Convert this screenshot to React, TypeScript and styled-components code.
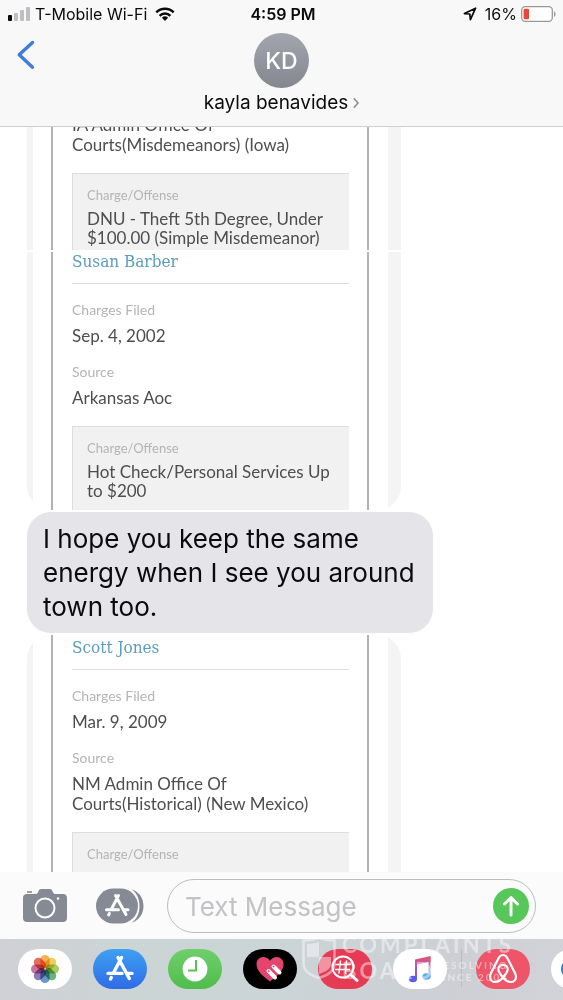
import React from "react";
import styled, { createGlobalStyle } from "styled-components";

const GlobalStyle = createGlobalStyle`
  *, *::before, *::after { box-sizing: border-box; }
  body { margin: 0; background: #ffffff; }
  button { border: 0; padding: 0; background: none; cursor: pointer; }
`;

const Screen = styled.div`
  position: relative;
  display: flex;
  flex-direction: column;
  height: 100vh;
  overflow: hidden;
  background: #ffffff;
  color: #0b0b0c;
  font-family: Inter, "Liberation Sans", sans-serif;
`;

const Header = styled.header`
  flex: none;
  background: #f8f8f8;
  border-bottom: 1px solid #cfcfd0;
`;

const StatusBar = styled.div`
  display: grid;
  grid-template-columns: 1fr auto 1fr;
  align-items: center;
  height: 28px;
  padding: 0 7px 0 8px;
  font-size: 16px;
  line-height: 20px;
`;

const StatusGroup = styled.div<{ $end?: boolean }>`
  display: flex;
  align-items: center;
  justify-content: ${(p) => (p.$end ? "flex-end" : "flex-start")};
  gap: ${(p) => (p.$end ? 4 : 5)}px;
  svg { display: block; }
`;

const Clock = styled.time`
  padding-left: 2px;
  font-weight: 600;
`;

const Battery = styled.span`
  display: flex;
  align-items: center;
  gap: 8px;
`;

const NavRow = styled.div`
  display: grid;
  grid-template-columns: 1fr auto 1fr;
  align-items: start;
  height: 98px;
`;

const BackButton = styled.button`
  justify-self: start;
  margin: 12px 0 0 16px;
  svg { display: block; }
`;

const Contact = styled.button`
  display: flex;
  flex-direction: column;
  align-items: center;
  gap: 3px;
  padding-top: 5px;
  color: inherit;
  font-family: inherit;
`;

const Avatar = styled.span`
  display: grid;
  place-items: center;
  width: 55px;
  height: 55px;
  border-radius: 50%;
  background: linear-gradient(#a3a6ae, #84878f);
  color: #ffffff;
  font-size: 23px;
  font-weight: 500;
`;

const ContactName = styled.span`
  display: flex;
  align-items: center;
  gap: 5px;
  font-size: 19px;
  line-height: 24px;
`;

const Thread = styled.main`
  flex: 1;
  min-height: 0;
  display: flex;
  flex-direction: column;
  align-items: flex-start;
  gap: 2px;
  padding-left: 27px;
`;

const Shot = styled.article<{ $position: "top" | "middle" | "last" }>`
  display: flex;
  width: 374px;
  overflow: hidden;
  padding: 0 13px 0 6px;
  background: #f4f4f4;
  ${(p) => p.$position === "top" && "height: 123px; align-items: flex-end;"}
  ${(p) => p.$position === "middle" && "height: 258px; border-radius: 0 0 24px 24px;"}
  ${(p) => p.$position === "last" && "flex: 1; min-height: 0; border-radius: 24px 24px 0 0;"}
`;

const Sheet = styled.div<{ $position: "top" | "middle" | "last" }>`
  flex: 1;
  align-self: ${(p) => (p.$position === "top" ? "flex-end" : "stretch")};
  padding: 0 19px 0 18px;
  background: #ffffff;
`;

const Record = styled.div<{ $position: "top" | "middle" | "last" }>`
  height: 100%;
  padding: ${(p) => (p.$position === "last" ? 3 : 0)}px 18px 0 19px;
  border: 2px solid #b2b2b2;
  border-width: 0 2px;
  color: #4e4e4e;
  font-family: Lato, "Open Sans", sans-serif;
`;

const PersonName = styled.h2`
  margin: 0 0 17px;
  padding-bottom: 13px;
  border-bottom: 1px solid #dcdcdc;
  color: #5a9dbd;
  font-family: "DejaVu Serif Condensed", "Liberation Serif", serif;
  font-size: 17px;
  font-weight: 400;
  line-height: 18px;
`;

const Fields = styled.dl`
  margin: 0;
  padding-bottom: 1px;
`;

const Label = styled.dt`
  margin-bottom: 7px;
  color: #b4b4b4;
  font-size: 14px;
  line-height: 18px;
`;

const Value = styled.dd`
  margin: 0 0 17px;
  font-size: 17px;
  line-height: 20px;
  white-space: pre-line;
`;

const Charge = styled.dl`
  margin: 0;
  padding: 12px 14px 3px;
  border: 1px solid #dddddd;
  border-width: 1px 0 0 1px;
  background: #f1f1f1;

  ${Label} { margin-bottom: 5px; font-size: 13px; }
  ${Value} { margin-bottom: 0; line-height: 19px; }
`;

const ChargeFill = styled(Charge)`
  height: 140px;
`;

const Bubble = styled.p`
  flex: none;
  width: 406px;
  margin: 0;
  padding: 10px 16px 9px;
  border-radius: 24px;
  background: #e4e4e9;
  color: #0b0b0c;
  font-size: 26px;
  line-height: 34px;
`;

const Composer = styled.form`
  flex: none;
  display: flex;
  align-items: center;
  height: 67px;
  padding: 0 27px 0 22px;
  background: #fbfbfc;
`;

const ToolButton = styled.button<{ $gap: number }>`
  flex: none;
  margin-right: ${(p) => p.$gap}px;
  svg { display: block; }
`;

const Field = styled.div`
  flex: 1;
  min-width: 0;
  display: flex;
  align-items: center;
  height: 54px;
  padding: 0 6px 0 17px;
  border: 1px solid #bdbdc0;
  border-radius: 27px;
`;

const TextInput = styled.input`
  flex: 1;
  min-width: 0;
  padding: 2px 0 0;
  border: 0;
  outline: 0;
  background: transparent;
  color: #0b0b0c;
  font-family: inherit;
  font-size: 26px;
  line-height: 34px;
  &::placeholder { color: #c3c3c6; opacity: 1; }
`;

const SendButton = styled.button`
  flex: none;
  display: grid;
  place-items: center;
  width: 36px;
  height: 36px;
  border-radius: 50%;
  background: #58c759;
`;

const AppStrip = styled.nav`
  flex: none;
  display: flex;
  align-items: flex-start;
  gap: 21px;
  height: 61px;
  padding: 10px 0 0 18px;
  overflow: hidden;
  background: linear-gradient(90deg, #d0d0d7 0, #cbd5d4 24%, #cbd4d7 50%, #cdcfd5 80%, #d1d3d9 100%);
`;

const AppButton = styled.button<{ $fill: string }>`
  flex: none;
  display: grid;
  place-items: center;
  width: 54px;
  height: 40px;
  border-radius: 20px;
  background: ${(p) => p.$fill};
  svg { display: block; }
`;

const StripDivider = styled.span`
  flex: none;
  width: 1px;
  height: 38px;
  margin: 0 -7px;
  background: #b9bcc2;
`;

const Watermark = styled.div`
  position: absolute;
  right: 48px;
  bottom: 16px;
  display: flex;
  align-items: center;
  gap: 6px;
  color: #ffffff;
  opacity: 0.45;
  font-family: Lato, sans-serif;
  pointer-events: none;
`;

const WatermarkText = styled.div`
  width: 173px;
  font-size: 22px;
  font-weight: 700;
  line-height: 26px;
  letter-spacing: 3px;
`;

const WatermarkRow = styled.div`
  display: flex;
  align-items: center;
  justify-content: space-between;
`;

const Tagline = styled.span`
  display: flex;
  flex-direction: column;
  width: 81px;
  font-size: 10px;
  line-height: 12px;
  letter-spacing: 2px;
  white-space: nowrap;
`;

const StoreGlyph = ({ size }: { size: number }) => (
  <svg width={size} height={size} viewBox="0 0 28 28" fill="none" stroke="#fff" strokeWidth="3.4" strokeLinecap="round">
    <path d="M15.6 2.5 7.4 18M12 2.5l11.3 21M2 18.4h14M21 18.4h5M5.3 22.4l-.8 1.6" />
  </svg>
);

const petals = ["#f2a33a", "#e9c93c", "#9cc24b", "#54a66a", "#4b86c0", "#7a63ab", "#c0598f", "#e4553f"];

const PhotosGlyph = () => (
  <svg width="30" height="30" viewBox="-15 -15 30 30">
    {petals.map((fill, i) => (
      <rect key={fill} x="-4.6" y="-14" width="9.2" height="13.4" rx="4.6" fill={fill} fillOpacity="0.85" transform={`rotate(${i * 45})`} style={{ mixBlendMode: "multiply" }} />
    ))}
  </svg>
);

interface RecordData {
  position: "top" | "middle" | "last";
  name?: string;
  filed?: string;
  source: string;
  charge?: string;
}

const records: RecordData[] = [
  { position: "top", source: "IA Admin Office Of\nCourts(Misdemeanors) (Iowa)", charge: "DNU - Theft 5th Degree, Under\n$100.00 (Simple Misdemeanor)" },
  { position: "middle", name: "Susan Barber", filed: "Sep. 4, 2002", source: "Arkansas Aoc", charge: "Hot Check/Personal Services Up\nto $200" },
  { position: "last", name: "Scott Jones", filed: "Mar. 9, 2009", source: "NM Admin Office Of\nCourts(Historical) (New Mexico)" },
];

const RecordShot = ({ position, name, filed, source, charge }: RecordData) => {
  const Box = position === "top" ? Charge : ChargeFill;
  return (
    <Shot $position={position}>
      <Sheet $position={position}>
        <Record $position={position}>
          {name && <PersonName>{name}</PersonName>}
          <Fields>
            {filed && (
              <>
                <Label>Charges Filed</Label>
                <Value>{filed}</Value>
                <Label>Source</Label>
              </>
            )}
            <Value>{source}</Value>
          </Fields>
          <Box>
            <Label>Charge/Offense</Label>
            {charge && <Value>{charge}</Value>}
          </Box>
        </Record>
      </Sheet>
    </Shot>
  );
};

export default function App() {
  return (
    <Screen>
      <GlobalStyle />
      <Header>
        <StatusBar>
          <StatusGroup>
            <svg width="22" height="14" viewBox="0 0 22 14">
              <rect x="0" y="8" width="4" height="6" rx="1" fill="#0b0b0c" />
              <rect x="6" y="6" width="4" height="8" rx="1" fill="#bfbfc1" />
              <rect x="12" y="3" width="4" height="11" rx="1" fill="#bfbfc1" />
              <rect x="18" y="0" width="4" height="14" rx="1" fill="#bfbfc1" />
            </svg>
            <span>T-Mobile Wi-Fi</span>
            <svg width="24" height="14" viewBox="-3 0 24 14" fill="none" stroke="#0b0b0c" strokeWidth="2.5">
              <path d="M1.3 5.4a12.4 12.4 0 0 1 17.4 0" />
              <path d="M4.6 8.8a7.7 7.7 0 0 1 10.8 0" />
              <path d="M10 14 6.9 10.8a4.5 4.5 0 0 1 6.2 0Z" fill="#0b0b0c" stroke="none" />
            </svg>
          </StatusGroup>
          <Clock>4:59 PM</Clock>
          <StatusGroup $end>
            <Battery>
              <svg width="14" height="14" viewBox="0 0 14 14" fill="none" stroke="#0b0b0c" strokeWidth="1.7" strokeLinejoin="round">
                <path d="M12.6 1.2 1.4 6.6l5.4.4.6 5.6Z" />
              </svg>
              <span>16%</span>
            </Battery>
            <svg width="35" height="16" viewBox="0 0 35 16">
              <rect x="0.7" y="0.7" width="30.6" height="14.6" rx="3.5" fill="#fff" stroke="#98989b" strokeWidth="1.3" />
              <rect x="2.6" y="2.8" width="5.4" height="10.4" rx="1" fill="#e8483a" />
              <path d="M33 5.2c2 .8 2 4.8 0 5.6Z" fill="#98989b" />
            </svg>
          </StatusGroup>
        </StatusBar>
        <NavRow>
          <BackButton aria-label="Back">
            <svg width="20" height="30" viewBox="0 0 20 30" fill="none" stroke="#3d7de0" strokeWidth="3.4" strokeLinecap="round" strokeLinejoin="round">
              <path d="M16.5 2.5 3.2 14.8l13.3 12.4" />
            </svg>
          </BackButton>
          <Contact>
            <Avatar>KD</Avatar>
            <ContactName>
              kayla benavides
              <svg width="6" height="12" viewBox="0 0 6 12" fill="none" stroke="#8d8d91" strokeWidth="1.5">
                <path d="M0.8 1.2 5 6 0.8 10.8" />
              </svg>
            </ContactName>
          </Contact>
        </NavRow>
      </Header>

      <Thread>
        <RecordShot {...records[0]} />
        <RecordShot {...records[1]} />
        <Bubble>I hope you keep the same energy when I see you around town too.</Bubble>
        <RecordShot {...records[2]} />
      </Thread>

      <Composer onSubmit={(e) => e.preventDefault()}>
        <ToolButton type="button" aria-label="Camera" $gap={28}>
          <svg width="46" height="36" viewBox="0 0 46 36">
            <path d="M5 3.2h5v1.6H5z" fill="#858a94" />
            <path d="M5 6h8.5c1.6 0 2.1-.8 2.7-2.2C17 1.7 17.800 1 19.500 1h8c1.700 0 2.500.7 3.300 2.800C31.400 5.200 31.900 6 33.500 6H41c2.600 0 4 1.400 4 4v20c0 2.600-1.400 4-4 4H5c-2.600 0-4-1.400-4-4V10c0-2.600 1.400-4 4-4Z" fill="#858a94" />
            <circle cx="23" cy="20" r="9.500" fill="none" stroke="#fff" strokeWidth="2" />
            <circle cx="36" cy="10.500" r="1.300" fill="#fff" />
          </svg>
        </ToolButton>
        <ToolButton type="button" aria-label="Apps" $gap={23}>
          <svg width="48" height="36" viewBox="0 0 48 36">
            <path d="M35.500 1.200C43 3.500 47.500 10 47.500 18S43 32.500 35.500 34.800C41 31 43.500 25 43.500 18S41 5 35.500 1.200Z" fill="#858a94" />
            <rect x="0" y="0.500" width="42" height="35" rx="17.500" fill="#858a94" />
            <g fill="none" stroke="#fff" strokeWidth="3" strokeLinecap="round">
              <path d="M22.500 7.500 15.500 21M19.500 7.500l10.500 19M10.500 21.700h12M27.500 21.700h4.500M13.400 25.500l-.7 1.400" />
            </g>
          </svg>
        </ToolButton>
        <Field>
          <TextInput type="text" aria-label="Text Message" placeholder="Text Message" />
          <SendButton type="submit" aria-label="Send">
            <svg width="20" height="22" viewBox="0 0 20 22" fill="none" stroke="#fff" strokeWidth="3" strokeLinecap="round" strokeLinejoin="round">
              <path d="M10 20V3M3.500 9 10 2.500 16.500 9" />
            </svg>
          </SendButton>
        </Field>
      </Composer>

      <AppStrip aria-label="Message apps">
        <AppButton $fill="#ffffff" aria-label="Photos"><PhotosGlyph /></AppButton>
        <AppButton $fill="linear-gradient(#3fa0f2, #2f6be6)" aria-label="App Store"><StoreGlyph size={28} /></AppButton>
        <AppButton $fill="linear-gradient(#70cf6c, #4fbd4c)" aria-label="Recents">
          <svg width="26" height="26" viewBox="0 0 26 26">
            <circle cx="13" cy="13" r="12.400" fill="#fff" />
            <path d="M14 4v10.500H6" fill="none" stroke="#5cc158" strokeWidth="2" />
          </svg>
        </AppButton>
        <AppButton $fill="#000000" aria-label="Digital Touch">
          <svg width="28" height="26" viewBox="0 0 28 26">
            <path d="M14 25.500C7 20 .5 15 .5 8.200.5 4 3.500 1 7.300 1c2.800 0 5.200 1.300 6.700 3.800C15.500 2.300 17.900 1 20.700 1c3.800 0 6.800 3 6.800 7.200 0 6.800-6.500 11.800-13.500 17.300Z" fill="#e5446c" />
            <path d="m12.500 15 6.500 6.500M17.500 10.500l6 6" stroke="#fff" strokeWidth="4" strokeLinecap="round" />
            <g fill="#e5446c"><circle cx="12.700" cy="15.200" r="1" /><circle cx="17.500" cy="10.500" r="1" /></g>
          </svg>
        </AppButton>
        <AppButton $fill="#e63b55" aria-label="Images">
          <svg width="28" height="28" viewBox="0 0 28 28" fill="none" stroke="#fff" strokeWidth="2">
            <circle cx="12" cy="12" r="10.500" />
            <path d="m19.500 19.500 6.500 6" strokeWidth="3" strokeLinecap="round" />
            <path d="M9.500 5.500 8 18.500M15.500 5.500 14.500 18.500M4.500 9.500h15M4 14.500h15" strokeWidth="1.500" />
          </svg>
        </AppButton>
        <AppButton $fill="#ffffff" aria-label="Music">
          <svg width="24" height="28" viewBox="0 0 24 28">
            <defs>
              <linearGradient id="note" x1="0" y1="0" x2="0" y2="1">
                <stop offset="0" stopColor="#ea5068" />
                <stop offset="0.500" stopColor="#b35bc4" />
                <stop offset="1" stopColor="#5d5ce6" />
              </linearGradient>
              <linearGradient id="noteEnd" x1="0" y1="0" x2="0" y2="1">
                <stop offset="0" stopColor="#ea5068" />
                <stop offset="1" stopColor="#58a8ee" />
              </linearGradient>
            </defs>
            <path d="M7 4.500 22.500 1v5.500L9 9.500v14H7Z" fill="url(#note)" />
            <path d="M20.500 2h2v20h-2Z" fill="url(#noteEnd)" />
            <ellipse cx="5" cy="24" rx="4" ry="3.200" fill="#5d5ce6" />
            <ellipse cx="18.500" cy="21.500" rx="4" ry="3.200" fill="#58a8ee" />
          </svg>
        </AppButton>
        <StripDivider />
        <AppButton $fill="#ee5568" aria-label="Airbnb">
          <svg width="28" height="30" viewBox="0 0 28 30" fill="none" stroke="#fff" strokeWidth="2.200" strokeLinejoin="round">
            <path d="M14 23.500c-3.200-3.700-4.700-6.200-4.700-8.300 0-2.600 2-4.400 4.700-4.400s4.700 1.800 4.700 4.400c0 2.100-1.500 4.600-4.700 8.300Zm0 0c-2.500 3-5 4.500-7.700 4.500-3.100 0-5.300-2.300-5.300-5.300 0-1 .3-2 1-3.600L9.700 4C10.800 1.800 12 1 14 1s3.200.8 4.300 3L26 19.100c.7 1.600 1 2.600 1 3.600 0 3-2.200 5.300-5.300 5.300-2.700 0-5.200-1.500-7.700-4.500Z" />
          </svg>
        </AppButton>
        <AppButton $fill="#ffffff" aria-label="More apps">
          <svg width="36" height="20" viewBox="0 0 36 20"><circle cx="11" cy="10" r="10" fill="#2f7dd8" /></svg>
        </AppButton>
      </AppStrip>

      <Watermark>
        <svg width="34" height="42" viewBox="0 0 34 42">
          <path d="M1.500 3.500C7 3.500 12 2.500 17 1c5 1.500 10 2.500 15.500 2.500V27c0 7-6 11-15.500 14C7.500 38 1.500 34 1.500 27Z" fill="none" stroke="#fff" strokeWidth="2.500" />
          <path d="M5 7c4.500 0 8-.7 12-2v15H5ZM17 20h12v7c0 4.500-4.500 7.500-12 10Z" fill="#fff" />
        </svg>
        <WatermarkText>
          <WatermarkRow>COMPLAINTS</WatermarkRow>
          <WatermarkRow>
            <span>BOARD</span>
            <Tagline>
              <span>RESOLVING</span>
              <span>SINCE 2004</span>
            </Tagline>
          </WatermarkRow>
        </WatermarkText>
      </Watermark>
    </Screen>
  );
}
